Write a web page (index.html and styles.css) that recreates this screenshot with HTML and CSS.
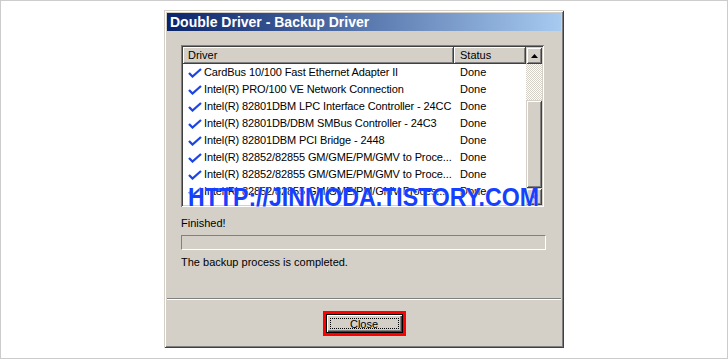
FILE: index.html
```html
<!DOCTYPE html>
<html lang="en">
<head>
    <meta charset="UTF-8">
    <meta name="viewport" content="width=device-width, initial-scale=1.0">
    <title>Double Driver - Backup Driver</title>
    <link rel="stylesheet" href="styles.css">
</head>
<body>
    <div class="page">
        <div class="window">
            <div class="titlebar">Double Driver - Backup Driver</div>
            <div class="client">
                <div class="listview">
                    <div class="lv-main">
                        <div class="lv-header">
                            <div class="hcol driver">Driver</div>
                            <div class="hcol status">Status</div>
                        </div>
                        <div class="lv-rows">
                            <div class="row"><div class="cell driver"><svg class="check" viewBox="0 0 14 10"><path d="M1 5 L4.5 8.5 L13 1"/></svg>CardBus 10/100 Fast Ethernet Adapter II</div><div class="cell status">Done</div></div>
                            <div class="row"><div class="cell driver"><svg class="check" viewBox="0 0 14 10"><path d="M1 5 L4.5 8.5 L13 1"/></svg>Intel(R) PRO/100 VE Network Connection</div><div class="cell status">Done</div></div>
                            <div class="row"><div class="cell driver"><svg class="check" viewBox="0 0 14 10"><path d="M1 5 L4.5 8.5 L13 1"/></svg>Intel(R) 82801DBM LPC Interface Controller - 24CC</div><div class="cell status">Done</div></div>
                            <div class="row"><div class="cell driver"><svg class="check" viewBox="0 0 14 10"><path d="M1 5 L4.5 8.5 L13 1"/></svg>Intel(R) 82801DB/DBM SMBus Controller - 24C3</div><div class="cell status">Done</div></div>
                            <div class="row"><div class="cell driver"><svg class="check" viewBox="0 0 14 10"><path d="M1 5 L4.5 8.5 L13 1"/></svg>Intel(R) 82801DBM PCI Bridge - 2448</div><div class="cell status">Done</div></div>
                            <div class="row"><div class="cell driver"><svg class="check" viewBox="0 0 14 10"><path d="M1 5 L4.5 8.5 L13 1"/></svg>Intel(R) 82852/82855 GM/GME/PM/GMV to Proce...</div><div class="cell status">Done</div></div>
                            <div class="row"><div class="cell driver"><svg class="check" viewBox="0 0 14 10"><path d="M1 5 L4.5 8.5 L13 1"/></svg>Intel(R) 82852/82855 GM/GME/PM/GMV to Proce...</div><div class="cell status">Done</div></div>
                            <div class="row"><div class="cell driver"><svg class="check" viewBox="0 0 14 10"><path d="M1 5 L4.5 8.5 L13 1"/></svg>Intel(R) 82852/82855 GM/GME/PM/GMV Proces...</div><div class="cell status">Done</div></div>
                        </div>
                    </div>
                    <div class="scrollbar">
                        <div class="sb-btn"><svg viewBox="0 0 7 4"><polygon points="0,4 7,4 3.5,0"/></svg></div>
                        <div class="sb-track"></div>
                        <div class="sb-thumb"></div>
                        <div class="sb-btn"><svg viewBox="0 0 7 4"><polygon points="0,0 7,0 3.5,4"/></svg></div>
                    </div>
                    <div class="watermark">HTTP://JINMODA.TISTORY.COM</div>
                </div>
                <div class="label">Finished!</div>
                <div class="progress"></div>
                <div class="label result">The backup process is completed.</div>
            </div>
            <div class="separator"></div>
            <div class="footer">
                <div class="highlight">
                    <button class="btn">Close</button>
                </div>
            </div>
        </div>
    </div>
</body>
</html>
```

FILE: styles.css
```css
body{
    margin:0;
    padding:0;
    background:#fff;
}
.page{
    width:728px;
    height:359px;
    box-sizing:border-box;
    border:1px solid #cccccc;
    padding-top:9px;
    display:flex;
    justify-content:center;
    align-items:flex-start;
    font-family:"Liberation Sans", Arial, sans-serif;
    font-size:11px;
    color:#000;
}
.window{
    width:400px;
    height:338px;
    box-sizing:border-box;
    padding:3px;
    background:#d4d0c8;
    box-shadow:inset 1px 1px #d4d0c8, inset -1px -1px #404040, inset 2px 2px #fff, inset -2px -2px #808080;
    display:flex;
    flex-direction:column;
}
.titlebar{
    height:18px;
    line-height:18px;
    padding-left:3px;
    background:linear-gradient(to right, #0a246a, #a6caf0);
    color:#fff;
    font-weight:bold;
    font-size:14px;
    white-space:nowrap;
}
.client{
    padding:14px 0 0 14px;
}
.listview{
    position:relative;
    width:363px;
    height:162px;
    box-sizing:border-box;
    padding:2px;
    background:#fff;
    box-shadow:inset 1px 1px #808080, inset -1px -1px #fff, inset 2px 2px #404040, inset -2px -2px #d4d0c8;
    display:flex;
}
.lv-main{
    width:343px;
    overflow:hidden;
}
.lv-header{
    display:flex;
    height:17px;
}
.hcol{
    box-sizing:border-box;
    height:17px;
    line-height:17px;
    padding-left:5px;
    background:#d4d0c8;
    box-shadow:inset -1px -1px #404040, inset 1px 1px #fff, inset -2px -2px #808080;
}
.hcol.driver{
    width:271px;
}
.hcol.status{
    width:72px;
    padding-left:6px;
}
.row{
    display:flex;
    height:17px;
    line-height:17px;
    white-space:nowrap;
}
.cell.driver{
    width:271px;
    padding-left:5px;
    box-sizing:border-box;
    display:flex;
    align-items:center;
    letter-spacing:-0.12px;
}
.cell.status{
    width:72px;
    padding-left:6px;
    box-sizing:border-box;
}
.check{
    width:14px;
    height:10px;
    margin-right:2px;
    flex-shrink:0;
}
.check path{
    fill:none;
    stroke:#1b45e6;
    stroke-width:2.3;
}
.scrollbar{
    width:16px;
    display:flex;
    flex-direction:column;
}
.sb-btn{
    height:17px;
    box-sizing:border-box;
    background:#d4d0c8;
    box-shadow:inset 1px 1px #d4d0c8, inset -1px -1px #404040, inset 2px 2px #fff, inset -2px -2px #808080;
    display:flex;
    align-items:center;
    justify-content:center;
}
.sb-btn svg{
    width:7px;
    height:4px;
}
.sb-track{
    height:36px;
    background:repeating-conic-gradient(#fff 0 25%, #d4d0c8 0 50%);
    background-size:2px 2px;
}
.sb-thumb{
    flex:1;
    background:#d4d0c8;
    box-shadow:inset 1px 1px #d4d0c8, inset -1px -1px #404040, inset 2px 2px #fff, inset -2px -2px #808080;
}
.watermark{
    position:absolute;
    left:7px;
    top:139px;
    line-height:26px;
    font-size:26px;
    font-weight:bold;
    color:#1540ff;
    white-space:nowrap;
    transform:scaleX(0.89);
    transform-origin:left top;
    text-shadow:0 0 1px #fff;
}
.label{
    margin-top:10px;
    height:13px;
    line-height:13px;
}
.progress{
    margin-top:5px;
    width:365px;
    height:15px;
    box-sizing:border-box;
    border:1px solid;
    border-color:#808080 #fff #fff #808080;
}
.label.result{
    margin-top:6px;
}
.separator{
    margin-top:29px;
    border-top:1px solid #808080;
    border-bottom:1px solid #fff;
    height:0;
}
.footer{
    display:flex;
    justify-content:center;
    padding-top:11px;
}
.highlight{
    border:3px solid #f00;
    display:flex;
}
.btn{
    width:77px;
    height:19px;
    margin:0;
    padding:0;
    border:1px solid #000;
    background:#d4d0c8;
    box-shadow:inset 1px 1px #fff, inset -1px -1px #404040, inset -2px -2px #808080;
    font-family:"Liberation Sans", Arial, sans-serif;
    font-size:11px;
    color:#000;
    outline:1px dotted #000;
    outline-offset:-5px;
}
```
